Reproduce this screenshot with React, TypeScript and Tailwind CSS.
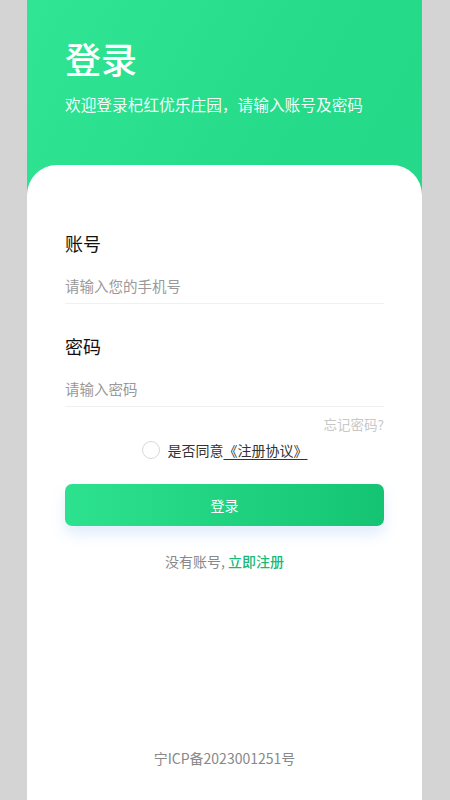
import { useState } from "react";

const font = { fontFamily: '"Noto Sans CJK SC", "Noto Sans", sans-serif' };

export default function App() {
    const [agreed, setAgreed] = useState(false);

    return (
        <div className="min-h-screen bg-[#d4d4d4]" style={font}>
            <div className="ml-[27px] flex min-h-screen w-[395px] flex-col bg-[linear-gradient(120deg,#30e594_0%,#25db8a_40%,#22d687_100%)]">
                {/* header */}
                <div className="px-[38px] pt-[36px] pb-[49px] text-white">
                    <h1 className="text-[36px] leading-[44px] font-medium">登录</h1>
                    <p className="mt-[14px] text-[15.7px] leading-[22px] text-white/95">
                        欢迎登录杞红优乐庄园，请输入账号及密码
                    </p>
                </div>

                {/* card */}
                <div className="flex flex-1 flex-col rounded-t-[30px] bg-white px-[38px] pt-[66px]">
                    <label className="text-[18px] leading-[24px] text-[#111]">账号</label>
                    <div className="mt-[18px] border-b border-[#f0f0f0] pb-[6px]">
                        <input
                            className="h-[20px] w-full text-[14.5px] leading-[20px] text-[#333] outline-none placeholder:text-[#999]"
                            placeholder="请输入您的手机号"
                        />
                    </div>

                    <label className="mt-[30px] text-[18px] leading-[24px] text-[#111]">密码</label>
                    <div className="mt-[18px] border-b border-[#f0f0f0] pb-[6px]">
                        <input
                            type="password"
                            className="h-[20px] w-full text-[14.5px] leading-[20px] text-[#333] outline-none placeholder:text-[#999]"
                            placeholder="请输入密码"
                        />
                    </div>

                    <div className="mt-[8px] text-right text-[13.5px] leading-[18px] text-[#c8c8c8]">忘记密码?</div>

                    <div className="mt-[7px] flex items-center justify-center gap-[8px]">
                        <button
                            onClick={() => setAgreed(!agreed)}
                            className={
                                agreed
                                    ? "h-[18px] w-[18px] rounded-full border border-[#22d687] bg-[#22d687]"
                                    : "h-[18px] w-[18px] rounded-full border border-[#d9d9d9] bg-white"
                            }
                        />
                        <span className="text-[14px] leading-[20px] text-[#333]">
                            是否同意<span className="underline underline-offset-[3px]">《注册协议》</span>
                        </span>
                    </div>

                    <button className="mt-[24px] h-[42px] w-full rounded-[7px] bg-[linear-gradient(90deg,#2de28f,#14c473)] text-[14px] text-white shadow-[0_8px_14px_rgba(120,170,240,0.22)]">
                        登录
                    </button>

                    <div className="mt-[25px] text-center text-[14px] leading-[20px] text-[#888]">
                        没有账号, <span className="font-medium text-[#1cb877]">立即注册</span>
                    </div>

                    <div className="mt-auto pb-[32px] text-center text-[14px] leading-[20px] text-[#888]">
                        宁ICP备2023001251号
                    </div>
                </div>
            </div>
        </div>
    );
}
